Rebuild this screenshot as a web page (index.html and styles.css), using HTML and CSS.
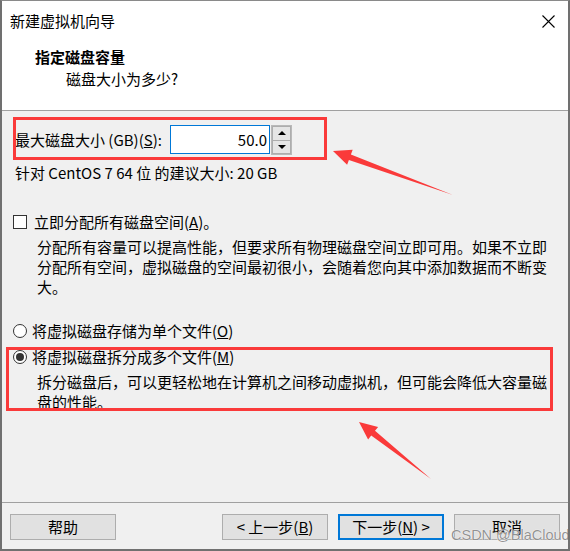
FILE: index.html
```html
<!DOCTYPE html>
<html lang="zh-CN">
<head>
<meta charset="utf-8">
<title>新建虚拟机向导</title>
<link rel="stylesheet" href="styles.css">
</head>
<body>
<div class="window">
  <div class="top">
    <div class="titlebar">
      <span class="title">新建虚拟机向导</span>
      <svg class="close" width="13" height="13" viewBox="0 0 13 13"><path d="M0.5 0.5 L12.5 12.5 M12.5 0.5 L0.5 12.5" stroke="#000" stroke-width="1.1" fill="none"/></svg>
    </div>
    <div class="heading">指定磁盘容量</div>
    <div class="subheading">磁盘大小为多少?</div>
  </div>
  <div class="sep"></div>
  <div class="content">
    <div class="size-row">
      <span class="size-label">最大磁盘大小 (GB)(<u>S</u>):</span>
      <div class="num-input">50.0</div>
      <div class="spin">
        <div class="spin-btn"><span class="tri-up"></span></div>
        <div class="spin-btn"><span class="tri-down"></span></div>
      </div>
    </div>
    <div class="hint">针对 CentOS 7 64 位 的建议大小: 20 GB</div>
    <div class="option check-row"><span class="checkbox"></span><span>立即分配所有磁盘空间(<u>A</u>)。</span></div>
    <p class="desc">分配所有容量可以提高性能，但要求所有物理磁盘空间立即可用。如果不立即<br>分配所有空间，虚拟磁盘的空间最初很小，会随着您向其中添加数据而不断变<br>大。</p>
    <div class="option radio-row first"><span class="radio"></span><span>将虚拟磁盘存储为单个文件(<u>O</u>)</span></div>
    <div class="option radio-row second"><span class="radio checked"></span><span>将虚拟磁盘拆分成多个文件(<u>M</u>)</span></div>
    <p class="desc">拆分磁盘后，可以更轻松地在计算机之间移动虚拟机，但可能会降低大容量磁<br>盘的性能。</p>
  </div>
  <div class="sep"></div>
  <div class="footer">
    <button class="btn">帮助</button>
    <span class="spacer"></span>
    <button class="btn">&lt; 上一步(<u>B</u>)</button>
    <button class="btn default">下一步(<u>N</u>) &gt;</button>
    <button class="btn">取消</button>
  </div>
  <div class="watermark">CSDN @BlaCloud</div>
  <svg class="annotations" width="570" height="551" viewBox="0 0 570 551">
    <rect x="14.5" y="118.5" width="311" height="40" fill="none" stroke="#fa3a3a" stroke-width="3"/>
    <rect x="7.5" y="348.5" width="544" height="61" fill="none" stroke="#fa3a3a" stroke-width="3"/>
    <polygon points="333,151 352.7,149.7 350.9,154.4 453,195 348.9,160 347.1,164.7" fill="#fa3a3a"/>
    <polygon points="359,422 378.1,426.9 375,430.8 431,479 371.2,435.6 368.1,439.5" fill="#fa3a3a"/>
  </svg>
</div>
</body>
</html>
```
FILE: styles.css
```css
html, body {
  margin: 0;
  padding: 0;
}

body {
  font-family: "Noto Sans CJK SC", "Microsoft YaHei", sans-serif;
  font-size: 15px;
  color: #000;
  background: #f0f0f0;
}

.window {
  position: relative;
  width: 570px;
  height: 551px;
  box-sizing: border-box;
  border: 2px solid #707070;
  border-top: 1px solid #8a8a8a;
  display: flex;
  flex-direction: column;
  background: #f0f0f0;
  overflow: hidden;
}

.top {
  background: #fff;
  height: 109px;
  flex: none;
}

.titlebar {
  height: 40px;
  display: flex;
  align-items: center;
  justify-content: space-between;
  padding: 0 13px 0 8px;
}

.title {
  line-height: 20px;
}

.close {
  display: block;
}

.heading {
  margin: 6px 0 0 33px;
  font-weight: bold;
  line-height: 20px;
}

.subheading {
  margin: 2px 0 0 64px;
  line-height: 20px;
}

.sep {
  height: 1px;
  background: #a0a0a0;
  flex: none;
}

.content {
  flex: 1;
  padding: 0 13px 0 11px;
}

.size-row {
  display: flex;
  align-items: flex-start;
  margin-top: 14px;
}

.size-label {
  width: 155px;
  padding-left: 2px;
  line-height: 30px;
}

.num-input {
  width: 100px;
  height: 29px;
  box-sizing: border-box;
  border: 1px solid #0078d7;
  background: #fff;
  text-align: right;
  padding-right: 2px;
  line-height: 27px;
}

.spin {
  width: 21px;
  height: 30px;
  margin-left: 1px;
  display: flex;
  flex-direction: column;
  border: 1px solid #b9b9b9;
  box-sizing: border-box;
  background: #f0f0f0;
}

.spin-btn {
  flex: 1;
  display: flex;
  align-items: center;
  justify-content: center;
  background: #e5e5e5;
  border: 1px solid #adadad;
}

.spin-btn + .spin-btn {
  border-top: none;
}

.tri-up {
  width: 0;
  height: 0;
  border-left: 4px solid transparent;
  border-right: 4px solid transparent;
  border-bottom: 4px solid #000;
}

.tri-down {
  width: 0;
  height: 0;
  border-left: 4px solid transparent;
  border-right: 4px solid transparent;
  border-top: 4px solid #000;
}

.hint {
  margin-top: 8px;
  padding-left: 2px;
  line-height: 20px;
}

.option {
  display: flex;
  align-items: center;
  line-height: 20px;
}

.check-row {
  margin-top: 29px;
}

.checkbox {
  width: 14px;
  height: 14px;
  box-sizing: border-box;
  border: 1px solid #333;
  background: #fff;
  margin-right: 7px;
  flex: none;
}

.desc {
  margin: 5px 0 0 24px;
  line-height: 20px;
  white-space: nowrap;
}

.radio-row.first {
  margin-top: 24px;
}

.radio-row.second {
  margin-top: 6px;
}

.radio {
  position: relative;
  width: 14px;
  height: 14px;
  box-sizing: border-box;
  border: 1px solid #333;
  border-radius: 50%;
  background: #fff;
  margin-right: 5px;
  flex: none;
}

.radio.checked::after {
  content: "";
  position: absolute;
  left: 2px;
  top: 2px;
  width: 8px;
  height: 8px;
  border-radius: 50%;
  background: #333;
}

.footer {
  height: 46px;
  box-sizing: border-box;
  padding: 11px 8px 0 8px;
  display: flex;
  align-items: flex-start;
  flex: none;
}

.spacer {
  flex: 1;
}

.btn {
  width: 106px;
  height: 26px;
  box-sizing: border-box;
  border: 1px solid #adadad;
  background: #e1e1e1;
  font-family: inherit;
  font-size: 15px;
  color: #000;
  padding: 0;
  line-height: 22px;
}

.btn + .btn {
  margin-left: 10px;
}

.btn.default {
  border: 2px solid #0078d7;
}

.watermark {
  position: absolute;
  left: 449px;
  top: 526px;
  font-family: "Liberation Sans", Arial, sans-serif;
  font-size: 14.5px;
  color: rgba(110, 110, 110, 0.75);
  text-shadow: 0 0 1px #fff, 0 0 1px #fff;
  white-space: nowrap;
}

.annotations {
  position: absolute;
  left: -2px;
  top: -1px;
  pointer-events: none;
}
```
